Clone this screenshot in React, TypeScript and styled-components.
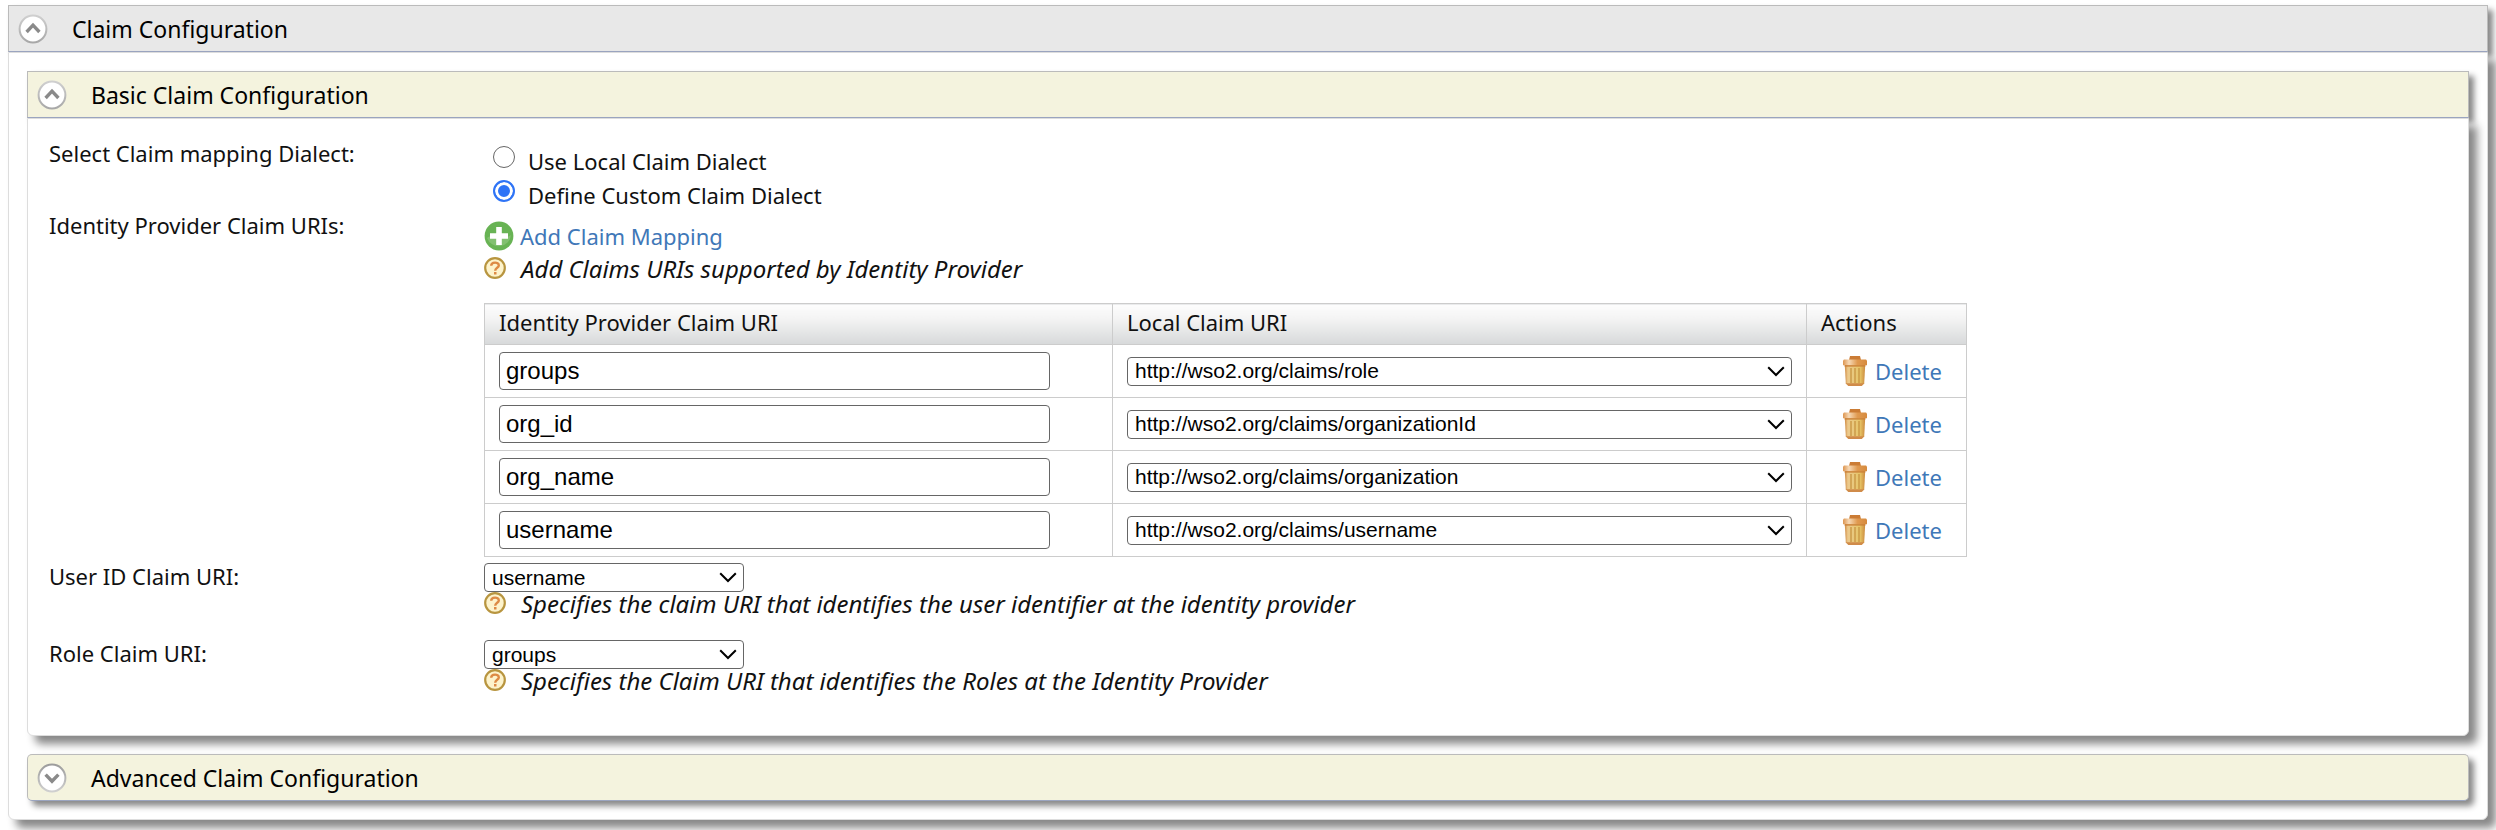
import React, { useState } from 'react';
import styled, { createGlobalStyle } from 'styled-components';

const GlobalStyle = createGlobalStyle`
  *, *::before, *::after { box-sizing: border-box; }
  body {
    margin: 0;
    background: #fff;
    color: #111;
    font-family: "Noto Sans", "Lucida Grande", sans-serif;
    font-size: 22px;
    line-height: 30px;
  }
`;

const Page = styled.main`
  padding: 5px 8px 10px;
`;

const Section = styled.section`
  display: flex;
  flex-direction: column;
`;

const SectionHeading = styled.h2<{ $tone: 'grey' | 'cream'; $open: boolean }>`
  margin: 0;
  border: 1px solid #bbb;
  border-bottom-color: #9ba5c0;
  border-radius: ${(p) => (p.$open ? '0' : '5px')};
  background: ${(p) => (p.$tone === 'grey' ? '#e8e8e8' : '#f4f3de')};
  box-shadow: 5px 5px 6px #888;
  font-size: 23px;
  font-weight: 400;
  line-height: 30px;
`;

const Toggle = styled.button`
  display: flex;
  align-items: center;
  gap: 24px;
  width: 100%;
  height: 45px;
  padding: 0 9px;
  border: 0;
  background: none;
  color: #000;
  font: inherit;
  text-align: left;
`;

const SectionBody = styled.div<{ $padding: string }>`
  padding: ${(p) => p.$padding};
  border: 1px solid #ddd;
  border-radius: 0 0 6px 6px;
  background: #fff;
  box-shadow: 8px 8px 8px #888;
`;

const Stack = styled.div`
  display: flex;
  flex-direction: column;
  gap: 18px;
`;

const FormRow = styled.div`
  display: grid;
  grid-template-columns: 435px minmax(0, 1fr);
  align-items: start;
`;

const SelectRow = styled(FormRow)`
  padding: 4px 0 18px;
`;

const RowLabel = styled.label``;

const RowContent = styled.div`
  display: flex;
  flex-direction: column;
  align-items: flex-start;
`;

const MappingContent = styled(RowContent)`
  gap: 6px;
  padding-top: 11px;
`;

const SelectContent = styled(RowContent)`
  padding-top: 2px;
`;

const RadioList = styled.div`
  display: flex;
  flex-direction: column;
  gap: 4px;
  padding: 8px 0 0 9px;
`;

const RadioOption = styled.label`
  display: flex;
  align-items: flex-start;
  gap: 13px;
`;

const Radio = styled.input`
  appearance: none;
  width: 22px;
  height: 22px;
  margin: 0;
  border: 1px solid #666;
  border-radius: 50%;
  background: #fff;

  &:checked {
    border: 2px solid #2f74f6;
    background: #2f74f6;
    box-shadow: inset 0 0 0 3px #fff;
  }
`;

const ActionLink = styled.a`
  display: flex;
  align-items: center;
  color: #3f78b8;
  text-decoration: none;
`;

const AddLink = styled(ActionLink)`
  gap: 6px;
`;

const DeleteLink = styled(ActionLink)`
  gap: 8px;
  padding-left: 22px;
`;

const Help = styled.p`
  display: flex;
  align-items: flex-start;
  gap: 15px;
  margin: 0;
  font-size: 24px;
  font-style: italic;
  line-height: 24px;
`;

const MappingTable = styled.table`
  width: 100%;
  max-width: 1483px;
  margin-top: 16px;
  border-collapse: collapse;
  table-layout: fixed;
`;

const HeadCell = styled.th<{ $width?: string }>`
  width: ${(p) => p.$width ?? 'auto'};
  height: 41px;
  padding: 0 14px 4px;
  border: 1px solid #ccc;
  background: linear-gradient(#fdfdfd, #f4f4f4 35%, #d7d9da);
  font-weight: 400;
  line-height: 30px;
  text-align: left;
`;

const Cell = styled.td`
  height: 53px;
  padding: 0 14px;
  border: 1px solid #ccc;
`;

const TextInput = styled.input`
  display: block;
  width: 100%;
  max-width: 551px;
  height: 38px;
  padding: 0 6px;
  border: 1px solid #666;
  border-radius: 4px;
  background: #fff;
  color: #000;
  font: 24px/30px "Liberation Sans", Arial, sans-serif;
`;

const SelectFrame = styled.div<{ $width: string }>`
  display: grid;
  grid-template-columns: minmax(0, 1fr);
  align-items: center;
  width: ${(p) => p.$width};

  > * { grid-area: 1 / 1; }

  > svg {
    justify-self: end;
    margin-right: 7px;
    pointer-events: none;
  }
`;

const SelectControl = styled.select`
  appearance: none;
  width: 100%;
  height: 29px;
  padding: 0 30px 0 7px;
  border: 1px solid #666;
  border-radius: 4px;
  background: #fff;
  color: #000;
  font: 21px/26px "Liberation Sans", Arial, sans-serif;
`;

const ToggleIcon = ({ open }: { open: boolean }) => (
  <svg width="30" height="30" viewBox="0 0 30 30" aria-hidden="true">
    <defs>
      <linearGradient id={open ? 'ring-open' : 'ring-closed'} x1="0" y1="0" x2="0" y2="1">
        <stop offset="0" stopColor={open ? '#cfcfcf' : '#9c9c9c'} />
        <stop offset="1" stopColor={open ? '#a8a8a8' : '#cfcfcf'} />
      </linearGradient>
    </defs>
    <circle
      cx="15"
      cy="15"
      r="13.4"
      fill="#fff"
      stroke={open ? 'url(#ring-open)' : 'url(#ring-closed)'}
      strokeWidth="2"
    />
    <path
      d={open ? 'M8.6 18 15 11.2 21.4 18' : 'M8.6 11.6 15 18.2 21.4 11.6'}
      fill="none"
      stroke="#8a8a8a"
      strokeWidth="3.4"
    />
  </svg>
);

const AddIcon = () => (
  <svg width="30" height="30" viewBox="0 0 30 30" aria-hidden="true">
    <circle cx="15" cy="15" r="14.4" fill="#68b354" />
    <path d="M3 17C8 12 20 20 27 14A12.4 12.4 0 0 1 3 17Z" fill="#82c070" />
    <path d="M12.2 6h5.6v6.2H24v5.6h-6.2V24h-5.6v-6.2H6v-5.6h6.2z" fill="#fff" />
  </svg>
);

const HelpIcon = () => (
  <svg width="22" height="22" viewBox="0 0 22 22" aria-hidden="true">
    <circle cx="11" cy="11" r="9.8" fill="#fdf3cc" stroke="#b8953f" strokeWidth="2.2" />
    <path
      d="M7.2 8.8C7.2 4.6 14.8 4.6 14.8 8.4 14.8 10.8 11.2 10.8 11.2 13.8"
      fill="none"
      stroke="#dd8a45"
      strokeWidth="2.4"
    />
    <rect x="10" y="15" width="2.5" height="2.5" fill="#dd8a45" />
  </svg>
);

const TrashIcon = () => (
  <svg width="24" height="30" viewBox="0 0 24 30" aria-hidden="true">
    <defs>
      <linearGradient id="can">
        <stop offset="0" stopColor="#cf8a42" />
        <stop offset="0.15" stopColor="#ecc98c" />
        <stop offset="0.45" stopColor="#e8c87c" />
        <stop offset="0.75" stopColor="#e6c465" />
        <stop offset="1" stopColor="#cc8a3e" />
      </linearGradient>
      <linearGradient id="lid">
        <stop offset="0" stopColor="#dd9550" />
        <stop offset="0.25" stopColor="#f6d9b6" />
        <stop offset="0.6" stopColor="#e09a50" />
        <stop offset="1" stopColor="#d68a3e" />
      </linearGradient>
    </defs>
    <path d="M7 0h10l1 4H6z" fill="#cb7c35" />
    <path d="M1.8 9h20.4l-1 18.6L18.6 30H5.4l-2.6-2.4z" fill="url(#can)" />
    <path d="M8 12v15M12 12v15M16 12v15" stroke="#cc9a48" strokeWidth="1.5" />
    <path d="M2.8 27.2h18.4L18.6 30H5.4z" fill="#d08b4a" />
    <path d="M1 3.6h22l1 1v4.6H0V4.6z" fill="url(#lid)" />
    <path d="M1.6 9.2h20.8v1.4H1.6z" fill="#cb8038" />
  </svg>
);

const ChevronIcon = () => (
  <svg width="18" height="11" viewBox="0 0 18 11" aria-hidden="true">
    <path d="M1.2 1.2 9 9l7.8-7.8" fill="none" stroke="#000" strokeWidth="2" />
  </svg>
);

interface SelectProps {
  id?: string;
  label?: string;
  value: string;
  options: string[];
  width: string;
}

const Select = ({ id, label, value, options, width }: SelectProps) => (
  <SelectFrame $width={width}>
    <SelectControl id={id} aria-label={label} defaultValue={value}>
      {options.map((option) => (
        <option key={option}>{option}</option>
      ))}
    </SelectControl>
    <ChevronIcon />
  </SelectFrame>
);

interface CollapsibleProps {
  title: string;
  tone: 'grey' | 'cream';
  padding?: string;
  defaultOpen?: boolean;
  children?: React.ReactNode;
}

const Collapsible = ({ title, tone, padding = '0', defaultOpen = false, children }: CollapsibleProps) => {
  const [open, setOpen] = useState(defaultOpen);
  return (
    <Section>
      <SectionHeading $tone={tone} $open={open}>
        <Toggle type="button" aria-expanded={open} onClick={() => setOpen(!open)}>
          <ToggleIcon open={open} />
          {title}
        </Toggle>
      </SectionHeading>
      {open && children && <SectionBody $padding={padding}>{children}</SectionBody>}
    </Section>
  );
};

const claims = [
  { idp: 'groups', local: 'http://wso2.org/claims/role' },
  { idp: 'org_id', local: 'http://wso2.org/claims/organizationId' },
  { idp: 'org_name', local: 'http://wso2.org/claims/organization' },
  { idp: 'username', local: 'http://wso2.org/claims/username' },
];
const idpClaims = claims.map((claim) => claim.idp);
const localClaims = claims.map((claim) => claim.local);

const HelpText = ({ children }: { children: React.ReactNode }) => (
  <Help>
    <HelpIcon />
    {children}
  </Help>
);

const ClaimTable = () => (
  <MappingTable>
    <thead>
      <tr>
        <HeadCell $width="628px">Identity Provider Claim URI</HeadCell>
        <HeadCell>Local Claim URI</HeadCell>
        <HeadCell $width="160px">Actions</HeadCell>
      </tr>
    </thead>
    <tbody>
      {claims.map((claim) => (
        <tr key={claim.idp}>
          <Cell>
            <TextInput aria-label="Identity Provider Claim URI" defaultValue={claim.idp} />
          </Cell>
          <Cell>
            <Select label="Local Claim URI" value={claim.local} options={localClaims} width="100%" />
          </Cell>
          <Cell>
            <DeleteLink href="#delete">
              <TrashIcon />
              Delete
            </DeleteLink>
          </Cell>
        </tr>
      ))}
    </tbody>
  </MappingTable>
);

const BasicClaims = () => (
  <>
    <FormRow role="radiogroup" aria-labelledby="dialect-label">
      <RowLabel as="span" id="dialect-label">Select Claim mapping Dialect:</RowLabel>
      <RadioList>
        <RadioOption>
          <Radio type="radio" name="dialect" />
          Use Local Claim Dialect
        </RadioOption>
        <RadioOption>
          <Radio type="radio" name="dialect" defaultChecked />
          Define Custom Claim Dialect
        </RadioOption>
      </RadioList>
    </FormRow>
    <FormRow>
      <RowLabel as="span">Identity Provider Claim URIs:</RowLabel>
      <MappingContent>
        <AddLink href="#add-claim">
          <AddIcon />
          Add Claim Mapping
        </AddLink>
        <HelpText>Add Claims URIs supported by Identity Provider</HelpText>
        <ClaimTable />
      </MappingContent>
    </FormRow>
    <SelectRow>
      <RowLabel htmlFor="user-id-claim">User ID Claim URI:</RowLabel>
      <SelectContent>
        <Select id="user-id-claim" value="username" options={idpClaims} width="260px" />
        <HelpText>Specifies the claim URI that identifies the user identifier at the identity provider</HelpText>
      </SelectContent>
    </SelectRow>
    <SelectRow>
      <RowLabel htmlFor="role-claim">Role Claim URI:</RowLabel>
      <SelectContent>
        <Select id="role-claim" value="groups" options={idpClaims} width="260px" />
        <HelpText>Specifies the Claim URI that identifies the Roles at the Identity Provider</HelpText>
      </SelectContent>
    </SelectRow>
  </>
);

export default function App() {
  return (
    <>
      <GlobalStyle />
      <Page>
        <Collapsible title="Claim Configuration" tone="grey" padding="18px" defaultOpen>
          <Stack>
            <Collapsible title="Basic Claim Configuration" tone="cream" padding="19px 21px 24px" defaultOpen>
              <BasicClaims />
            </Collapsible>
            <Collapsible title="Advanced Claim Configuration" tone="cream" />
          </Stack>
        </Collapsible>
      </Page>
    </>
  );
}
